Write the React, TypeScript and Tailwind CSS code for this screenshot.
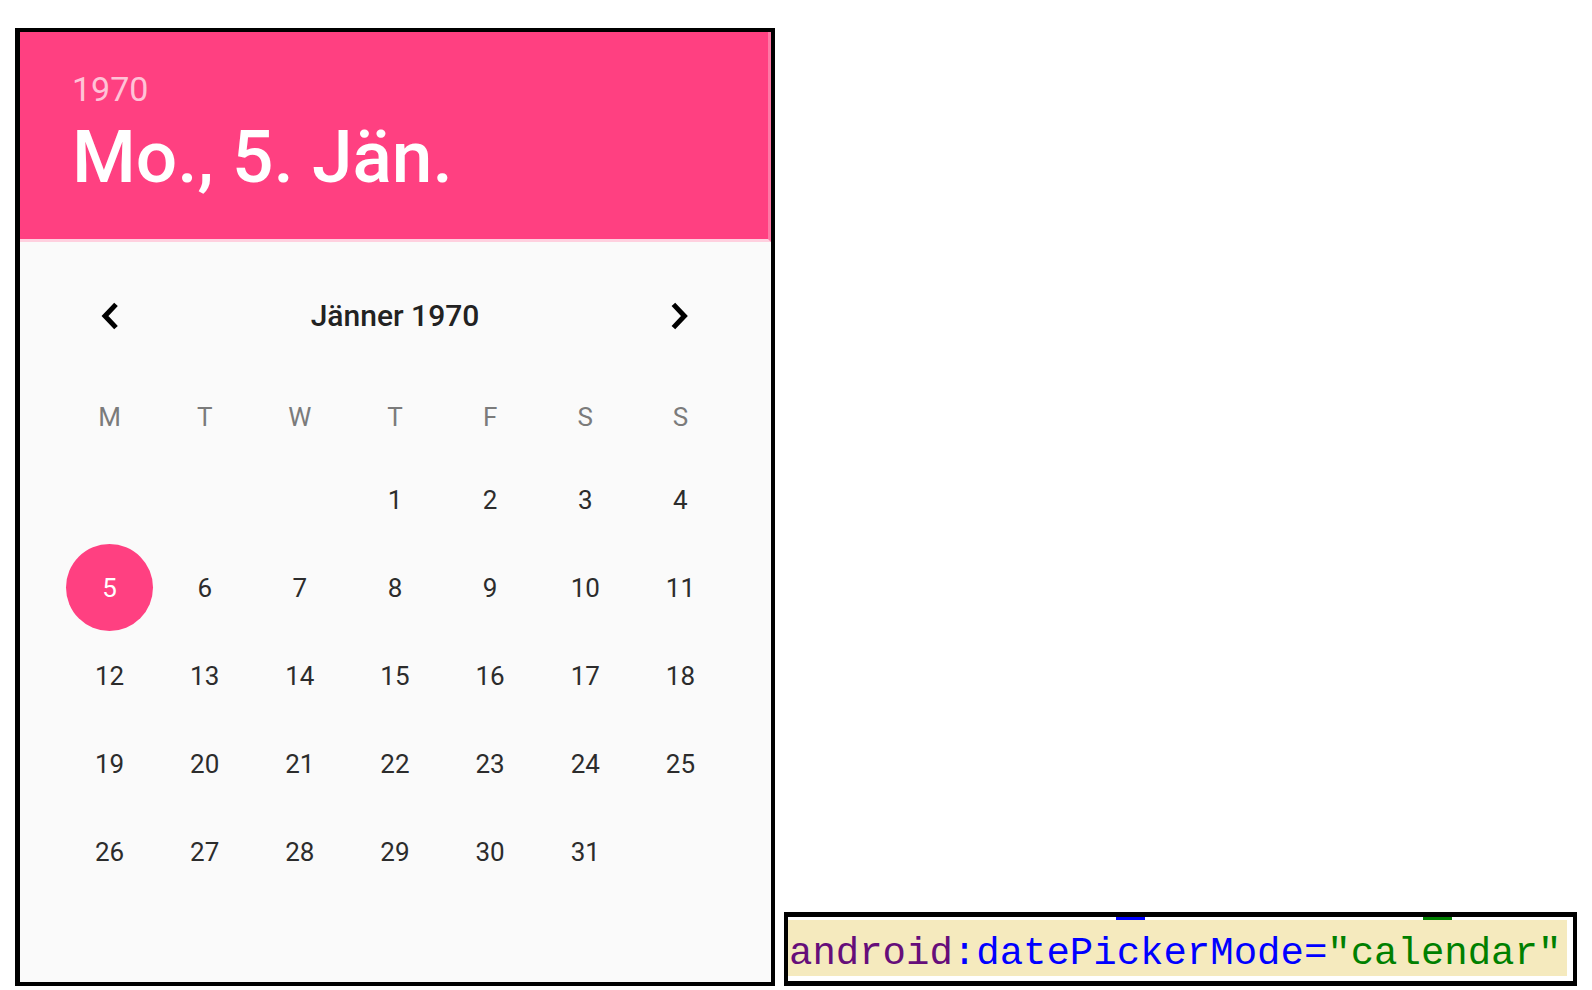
import React, { useState } from "react";

const WEEKDAYS = [
  { short: "M", name: "Monday" },
  { short: "T", name: "Tuesday" },
  { short: "W", name: "Wednesday" },
  { short: "T", name: "Thursday" },
  { short: "F", name: "Friday" },
  { short: "S", name: "Saturday" },
  { short: "S", name: "Sunday" },
];

const FIRST_WEEKDAY = 3;
const DAYS_IN_MONTH = 31;

const WEEKS: (number | null)[][] = Array.from({ length: 5 }, (_, week) =>
  Array.from({ length: 7 }, (_, column) => {
    const day = week * 7 + column - FIRST_WEEKDAY + 1;
    return day >= 1 && day <= DAYS_IN_MONTH ? day : null;
  }),
);

function Chevron({ direction }: { direction: "left" | "right" }) {
  return (
    <svg
      viewBox="0 0 18 28"
      className="h-7 w-[18px]"
      fill="none"
      stroke="black"
      strokeWidth="5"
      aria-hidden="true"
    >
      <path d={direction === "left" ? "M15 2.4 L4 14 L15 25.6" : "M2.4 2.4 L13.4 14 L2.4 25.6"} />
    </svg>
  );
}

function DatePicker() {
  const [selected, setSelected] = useState(5);

  return (
    <section className="border-y-4 border-l-[5px] border-r-4 border-black bg-[#fafafa] font-[Roboto,sans-serif]">
      <header className="border-r-[3px] border-b-[3px] border-r-[#ff77a5] border-b-[#ffd0df] bg-[#ff4081] pt-[39px] pr-10 pb-[38px] pl-[52px]">
        <p className="text-[34px] leading-9 text-[#ffc3d7]">1970</p>
        <h1 className="mt-1.5 text-[73px] leading-[88px] font-medium whitespace-nowrap text-white">
          Mo., {selected}. Jän.
        </h1>
      </header>

      <div className="pt-[34px] pr-[43px] pb-[87px] pl-[42px]">
        <div className="grid h-20 grid-cols-7 items-center">
          <button type="button" aria-label="Previous month" className="flex h-20 items-center justify-center">
            <Chevron direction="left" />
          </button>
          <h2 className="col-span-5 text-center text-[30px] leading-9 font-medium text-[#222222]">Jänner 1970</h2>
          <button type="button" aria-label="Next month" className="flex h-20 items-center justify-center">
            <Chevron direction="right" />
          </button>
        </div>

        <table className="mt-[21px] w-full table-fixed border-collapse text-[26px] leading-8">
          <thead>
            <tr className="h-[78px]">
              {WEEKDAYS.map((day) => (
                <th key={day.name} scope="col" abbr={day.name} className="p-0 pt-0.5 font-normal text-[#7b7b7b]">
                  {day.short}
                </th>
              ))}
            </tr>
          </thead>
          <tbody>
            {WEEKS.map((week, index) => (
              <tr key={index} className="h-22">
                {week.map((day, column) => (
                  <td key={column} className="p-0 text-center">
                    {day !== null && (
                      <button
                        type="button"
                        aria-pressed={day === selected}
                        onClick={() => setSelected(day)}
                        className={
                          day === selected
                            ? "mx-auto flex size-[87px] items-center justify-center rounded-full bg-[#ff4081] pt-0.5 text-white"
                            : "mx-auto flex size-[87px] items-center justify-center rounded-full pt-0.5 text-[#2c2c2c]"
                        }
                      >
                        {day}
                      </button>
                    )}
                  </td>
                ))}
              </tr>
            ))}
          </tbody>
        </table>
      </div>
    </section>
  );
}

function CodeSnippet() {
  return (
    <section className="border-x-4 border-y-[5px] border-black bg-white pr-[6px] pb-[5px]">
      <div className="flex h-[3px]" aria-hidden="true">
        <span className="ml-82 w-[29px] bg-[#0000ff]" />
        <span className="ml-[278px] w-[29px] bg-[#008000]" />
      </div>
      <pre className="bg-[#f5eabe] pt-3 pl-px font-['Liberation_Mono',monospace] text-[39px] leading-11">
        <code className="font-['Liberation_Mono',monospace]">
          <span className="text-[#660e7a]">android</span>
          <span className="text-[#0000ff]">:datePickerMode=</span>
          <span className="text-[#008000]">"calendar"</span>
        </code>
      </pre>
    </section>
  );
}

export default function App() {
  return (
    <main className="grid grid-cols-[760fr_793fr] items-end gap-[9px] bg-white px-[15px] pt-7 pb-1">
      <DatePicker />
      <CodeSnippet />
    </main>
  );
}
